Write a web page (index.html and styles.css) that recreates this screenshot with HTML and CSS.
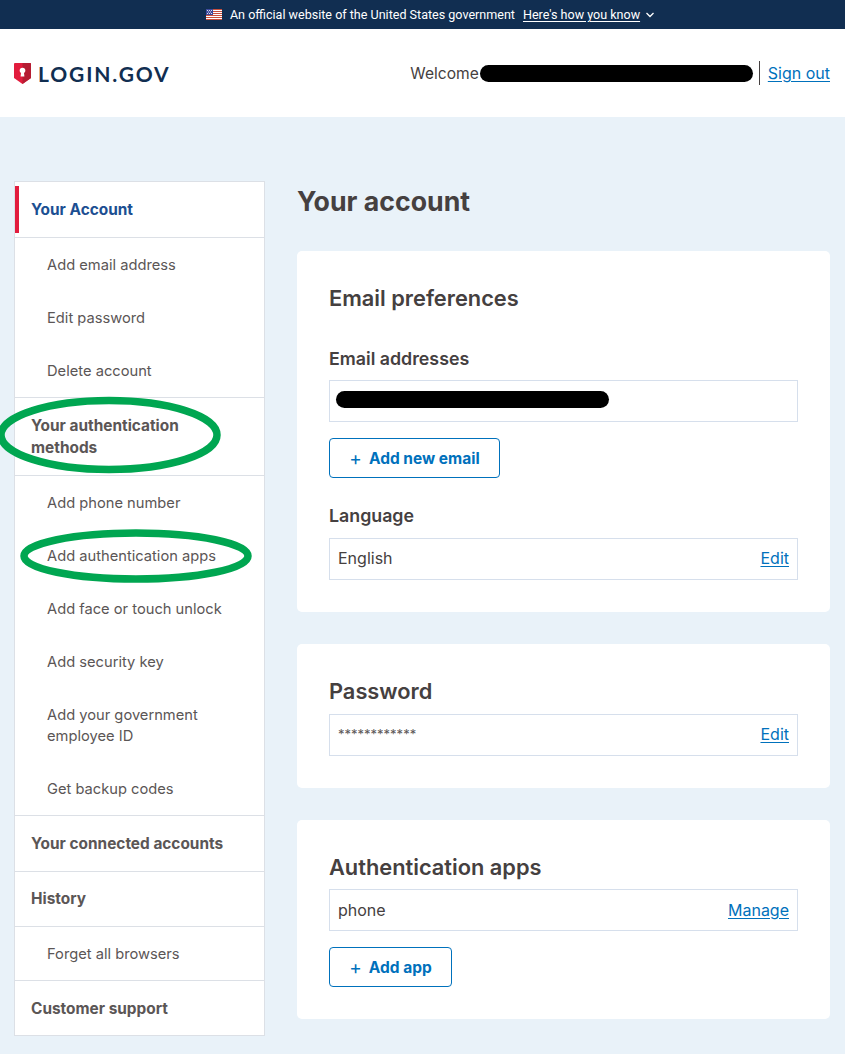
FILE: index.html
```html
<!DOCTYPE html>
<html lang="en">
<head>
  <meta charset="UTF-8" />
  <title>Your account - Login.gov</title>
  <link rel="stylesheet" href="styles.css">
</head>
<body>
  <div class="banner">
    <svg class="flag" width="16" height="11" viewBox="0 0 16 11">
      <rect width="16" height="11" fill="#fff"/>
      <path d="M0 .5h16M0 2.5h16M0 4.5h16M0 6.5h16M0 8.5h16M0 10.500h16" stroke="#c8503c" stroke-width="1"/>
      <rect width="7" height="6" fill="#3c4a9c"/>
      <path d="M1 1.500h1M3 1.500h1M5 1.500h1M2 3h1M4 3h1M1 4.500h1M3 4.500h1M5 4.500h1" stroke="#fff" stroke-width=".8"/>
    </svg>
    <span>An official website of the United States government</span>
    <a href="#">Here's how you know</a>
    <svg class="chev" width="10" height="6" viewBox="0 0 10 6"><path d="M1.500 1 5 4.500 8.500 1" fill="none" stroke="#fff" stroke-width="1.300"/></svg>
  </div>

  <header class="top">
    <div class="logo">
      <svg width="17" height="21" viewBox="0 0 17 21">
        <path d="M1 0h15a1 1 0 0 1 1 1v14l-8.500 6L0 15V1a1 1 0 0 1 1-1z" fill="#e21c3d"/>
        <path d="M8.500 0H16a1 1 0 0 1 1 1v14l-8.500 6z" fill="#b51d33"/>
        <circle cx="8.500" cy="7.500" r="2.800" fill="#fff"/>
        <path d="M7.200 8h2.600l.6 5.500H6.600z" fill="#fff"/>
      </svg>
      <span>LOGIN.GOV</span>
    </div>
    <div class="user">
      <span class="welcome">Welcome</span>
      <span class="blob name-blob"></span>
      <a href="#" class="signout">Sign out</a>
    </div>
  </header>

  <div class="page">
    <nav class="side">
      <a class="head current" href="#">Your Account</a>
      <ul>
        <li>Add email address</li>
        <li>Edit password</li>
        <li>Delete account</li>
      </ul>
      <a class="head" href="#">Your authentication<br>methods</a>
      <ul>
        <li>Add phone number</li>
        <li>Add authentication apps</li>
        <li>Add face or touch unlock</li>
        <li>Add security key</li>
        <li>Add your government employee ID</li>
        <li>Get backup codes</li>
      </ul>
      <a class="head" href="#">Your connected accounts</a>
      <a class="head history" href="#">History</a>
      <ul>
        <li>Forget all browsers</li>
      </ul>
      <a class="head last" href="#">Customer support</a>
    </nav>

    <main class="content">
      <h1>Your account</h1>

      <section class="card">
        <h2 class="mail-h">Email preferences</h2>
        <h3 class="mail-label">Email addresses</h3>
        <div class="row"><span class="blob mail-blob"></span></div>
        <a class="btn btn-email" href="#"><span class="plus">+</span>Add new email</a>
        <h3 class="lang">Language</h3>
        <div class="row"><span>English</span><a href="#">Edit</a></div>
      </section>

      <section class="card">
        <h2 class="pass-h">Password</h2>
        <div class="row"><span class="stars">************</span><a href="#">Edit</a></div>
      </section>

      <section class="card">
        <h2 class="apps-h">Authentication apps</h2>
        <div class="row apps-row"><span>phone</span><a href="#">Manage</a></div>
        <a class="btn btn-app" href="#"><span class="plus">+</span>Add app</a>
      </section>
    </main>
  </div>

  <svg class="ring ring-one" width="226" height="78" viewBox="0 0 226 78"><ellipse cx="113" cy="39" rx="108" ry="34.500" fill="none" stroke="#00a651" stroke-width="7.500"/></svg>
  <svg class="ring ring-two" width="234" height="56" viewBox="0 0 234 56"><ellipse cx="117" cy="28" rx="112" ry="23" fill="none" stroke="#00a651" stroke-width="7.500"/></svg>
</body>
</html>
```

FILE: styles.css
```css
* {
  box-sizing: border-box;
}
body {
  margin: 0;
  position: relative;
  font-family: 'Inter', 'Liberation Sans', sans-serif;
  font-size: 16px;
  color: #454040;
  background: #e9f2f9;
  height: 1054px;
  overflow: hidden;
}
a {
  color: #0071bc;
  text-underline-offset: 2px;
}
.banner {
  height: 29px;
  padding-left: 16px;
  background: #112e51;
  color: #fff;
  font-family: 'Roboto', sans-serif;
  font-size: 12.550px;
  display: flex;
  align-items: center;
  justify-content: center;
}
.banner .flag {
  margin-right: 8px;
}
.banner a {
  color: #fff;
  margin-left: 8px;
}
.banner .chev {
  margin-left: 5px;
}
.top {
  height: 88px;
  background: #fff;
  display: flex;
  align-items: center;
  justify-content: space-between;
  padding: 0 15px 0 14px;
}
.logo {
  display: flex;
  align-items: center;
  gap: 7px;
  color: #112e51;
  font-family: 'Lato', sans-serif;
  font-weight: 700;
  font-size: 21px;
  letter-spacing: 1.850px;
}
.user {
  display: flex;
  align-items: center;
}
.welcome {
  font-size: 15.600px;
}
.blob {
  display: block;
  background: #000;
  border-radius: 9px;
  height: 17px;
}
.name-blob {
  width: 273px;
  margin-left: 1px;
}
.signout {
  margin-left: 6px;
  padding-left: 8px;
  border-left: 1px solid #454040;
  line-height: 24px;
}
.page {
  display: flex;
  align-items: flex-start;
  gap: 32px;
  padding: 64px 15px 0 14px;
}
.side {
  width: 251px;
  flex: none;
  background: #fff;
  border: 1px solid #dce0e6;
}
.side .head {
  display: block;
  padding: 17px 16px 16px;
  line-height: 22px;
  font-size: 15.400px;
  font-weight: 700;
  color: #5b5656;
  text-decoration: none;
  border-bottom: 1px solid #dce0e6;
}
.side .head.current {
  color: #1c4f92;
  position: relative;
}
.side .head.current::before {
  content: "";
  position: absolute;
  left: 0;
  top: 4px;
  bottom: 4px;
  width: 4px;
  background: #e21c3d;
}
.side .head.history {
  padding: 16px;
}
.side .head.last {
  padding: 16.500px 16px 15.500px;
  border-bottom: 0;
}
.side ul {
  list-style: none;
  margin: 0;
  padding: 0;
  border-bottom: 1px solid #dce0e6;
}
.side li {
  padding: 17px 32px 15px;
  line-height: 21px;
  color: #5b5656;
  font-size: 14.700px;
}
.content {
  flex: 1;
  min-width: 0;
}
h1 {
  margin: 0 0 31px;
  padding-top: 1px;
  font-size: 26.700px;
  font-weight: 700;
  line-height: 38px;
}
.card {
  background: #fff;
  border-radius: 5px;
  padding: 32px;
  margin-bottom: 32px;
}
h2 {
  margin: 0;
  font-size: 21.800px;
  font-weight: 600;
  line-height: 31px;
}
h2.mail-h {
  margin-bottom: 33px;
}
h2.pass-h {
  margin-bottom: 7px;
}
h2.apps-h {
  margin-bottom: 6px;
}
h3 {
  margin: 0;
  font-size: 17.800px;
  font-weight: 600;
  line-height: 24px;
}
h3.mail-label {
  margin-bottom: 9px;
}
h3.lang {
  margin: 26px 0 10px;
}
.row {
  height: 42px;
  border: 1px solid #d6dfec;
  display: flex;
  align-items: center;
  justify-content: space-between;
  padding: 0 8px 2px;
}
.apps-row {
  padding-bottom: 0;
}
.stars {
  font-size: 13px;
  color: #5b5656;
}
.mail-blob {
  width: 273px;
  margin: -1px 0 0 -2px;
}
.btn {
  display: flex;
  align-items: center;
  justify-content: center;
  height: 40px;
  margin-top: 16px;
  border: 1px solid #0071bc;
  border-radius: 4px;
  color: #0071bc;
  font-size: 15.500px;
  font-weight: 700;
  text-decoration: none;
}
.btn-email {
  width: 171px;
}
.btn-app {
  width: 123px;
}
.plus {
  font-size: 19px;
  font-weight: 400;
  margin-right: 7px;
}
.ring {
  position: absolute;
}
.ring-one {
  left: -4px;
  top: 396px;
}
.ring-two {
  left: 19px;
  top: 528px;
}
```
